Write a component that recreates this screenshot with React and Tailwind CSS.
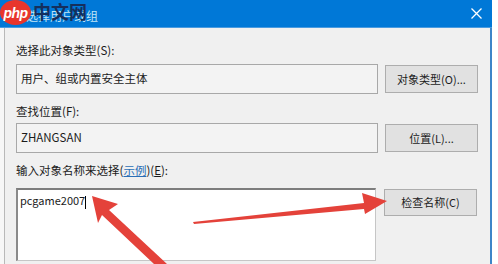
import React from 'react';

// --- Overlay drawings ---
const PhpLogo = () => (
  <div className="absolute left-0 top-0 flex items-start">
    <div className="w-[31px] h-[25px] bg-[#e8352c] rounded-[50%] flex items-center justify-center">
      <span className="text-white italic font-bold text-[14px] leading-none tracking-[-0.5px]" style={{ fontFamily: '"Liberation Sans", sans-serif' }}>php</span>
    </div>
    <span className="ml-[2px] mt-[2px] text-[#152f5c] font-bold text-[18px] leading-none" style={{ fontFamily: '"Noto Sans CJK SC", sans-serif' }}>中文网</span>
  </div>
);

const Arrows = () => (
  <svg className="absolute left-0 top-0 pointer-events-none" width="498" height="264" viewBox="0 0 498 264">
    {/* arrow to the name box */}
    <polygon fill="#e4423a" points="92,196 118,204 109,210 167,264 154,264 102,215 98,223" />
    {/* arrow to check-names button */}
    <polygon fill="#e4423a" points="193,222 364,203 362,193 387,201 365,214 364,209 194,224" />
  </svg>
);

const Label = ({ children, className = '' }) => (
  <div className={`h-[14px] text-[11.5px] leading-[14px] text-[#1b1b1b] ${className}`}>{children}</div>
);

const Button = ({ children, className = '' }) => (
  <div className={`w-[93px] bg-[#e1e1e1] border border-[#adadad] flex items-center justify-center text-[11px] text-[#1b1b1b] ${className}`}>
    {children}
  </div>
);

export default function App() {
  return (
    <div className="w-[498px] h-[264px] bg-white relative overflow-hidden" style={{ fontFamily: '"Noto Sans CJK SC", "Noto Sans", sans-serif' }}>
      <div className="w-[492px] h-full flex flex-col">
        <div className="h-[28px] bg-[#0078d7] border-b border-[#4a9be0] flex items-center justify-between shrink-0">
          <span className="ml-[26px] mt-[4px] text-[12px] text-[#bfe3f5]">选择用户或组</span>
          <svg className="mr-[10px]" width="11" height="11" viewBox="0 0 11 11" stroke="#ffffff" strokeWidth="1.3">
            <path d="M0.5 0.5 L10.5 10.5 M10.5 0.5 L0.5 10.5" />
          </svg>
        </div>
        <div className="flex-1 flex">
          <div className="w-[4px] bg-[#f7f7f7]" />
          <div className="flex-1 bg-[#f0f0f0] border-l border-[#b9b9b9] border-r-2 border-r-[#3d85c8] pl-[11px] flex flex-col">
            <Label className="mt-[15px]">选择此对象类型(S):</Label>
            <div className="mt-[7px] flex items-start">
              <div className="w-[362px] h-[30px] bg-[#f3f3f3] border border-[#a8a8a8] px-[4px] flex items-center text-[11.5px] text-[#1b1b1b]">用户、组或内置安全主体</div>
              <Button className="ml-[7px] mt-[1px] h-[28px]">对象类型(O)...</Button>
            </div>

            <Label className="mt-[10px]">查找位置(F):</Label>
            <div className="mt-[5px] flex items-start">
              <div className="w-[362px] h-[30px] bg-[#f3f3f3] border border-[#a8a8a8] px-[4px] flex items-center text-[11.5px] text-[#1b1b1b]">ZHANGSAN</div>
              <Button className="ml-[7px] mt-[1px] h-[28px]">位置(L)...</Button>
            </div>

            <Label className="mt-[10px]">
              输入对象名称来选择(<span className="text-[#2a6fb7] underline">示例</span>)(<span className="underline">E</span>):
            </Label>
            <div className="mt-[11px] flex items-start">
              <div className="w-[360px] h-[73px] bg-white border border-[#c6c6c6] border-t-2 border-t-[#7d7d7d] border-l-2 border-l-[#8a8a8a] pl-[2px] pt-[2px] text-[11px] leading-[16px] text-[#1b1b1b]">
                pcgame2007<span className="inline-block w-[1px] h-[13px] bg-black align-middle" />
              </div>
              <Button className="ml-[8px] mt-[1px] h-[27px]">检查名称(C)</Button>
            </div>
          </div>
        </div>
      </div>
      <PhpLogo />
      <Arrows />
    </div>
  );
}
